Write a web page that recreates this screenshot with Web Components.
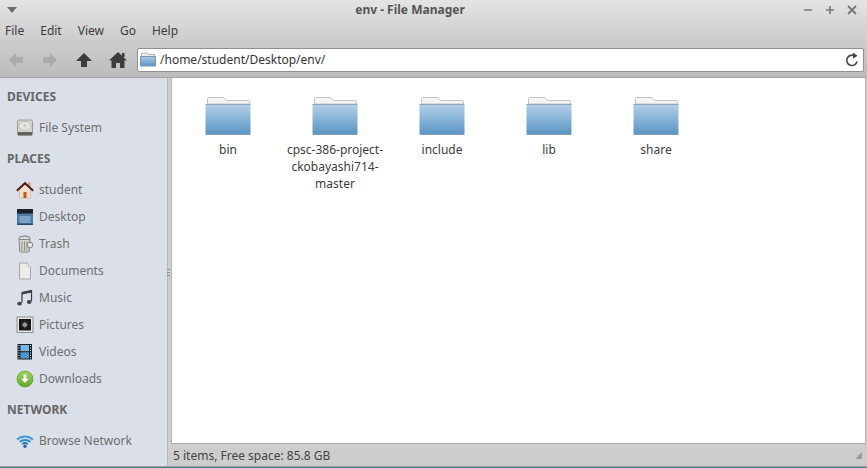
<!DOCTYPE html>
<html>
<head>
<meta charset="utf-8">
<title>env - File Manager</title>
<style>
  html, body { margin: 0; height: 100%; background: #4f7f8c; overflow: hidden; }
  body { font: 12px "Noto Sans", sans-serif; color: #333; }
</style>
</head>
<body>
<fm-window>
  <fm-header slot="header"></fm-header>
  <fm-sidebar slot="side">
    <fm-heading>DEVICES</fm-heading>
    <fm-place icon="disk">File System</fm-place>
    <fm-heading>PLACES</fm-heading>
    <fm-place icon="home">student</fm-place>
    <fm-place icon="desktop">Desktop</fm-place>
    <fm-place icon="trash">Trash</fm-place>
    <fm-place icon="doc">Documents</fm-place>
    <fm-place icon="music">Music</fm-place>
    <fm-place icon="pictures">Pictures</fm-place>
    <fm-place icon="videos">Videos</fm-place>
    <fm-place icon="downloads">Downloads</fm-place>
    <fm-heading>NETWORK</fm-heading>
    <fm-place icon="wifi">Browse Network</fm-place>
  </fm-sidebar>
  <fm-files slot="main">
    <fm-folder>bin</fm-folder>
    <fm-folder>cpsc-386-project-ckobayashi714-master</fm-folder>
    <fm-folder>include</fm-folder>
    <fm-folder>lib</fm-folder>
    <fm-folder>share</fm-folder>
  </fm-files>
  <fm-status slot="status">5 items, Free space: 85.8 GB</fm-status>
</fm-window>

<script>
// icons for the side pane, all on a 18x18 box
const ICONS = {
  disk: `<rect x="1.500" y="1" width="15" height="15.500" rx="1.500" fill="#d6d6d3" stroke="#9a9a97"/>
    <ellipse cx="9" cy="7" rx="6" ry="4.600" fill="#e4e4e1" stroke="#b0b0ad" stroke-width=".7"/>
    <circle cx="9" cy="6.600" r="1.400" fill="#c4c4c1"/>
    <rect x="2" y="13" width="14" height="3.100" fill="#62615c"/>`,
  home: `<rect x="12" y="1.500" width="2.500" height="5" fill="#c9a58a"/>
    <path d="M3.500 8.500V17h11V8.500L9 3.500z" fill="#f1dfcc" stroke="#c8ab90" stroke-width=".6"/>
    <rect x="7.500" y="11" width="3" height="6" fill="#b9591b"/>
    <path d="M.8 9.800 9 2.200l8.200 7.600" fill="none" stroke="#561a14" stroke-width="2"/>`,
  desktop: `<rect x="1" y="1" width="16" height="16" rx="1" fill="#4a7da6"/>
    <rect x="1" y="1" width="16" height="4.500" fill="#1d2126"/>
    <rect x="3.500" y="8" width="11" height="7" fill="#7aa3c4"/>
    <rect x="1" y="15.500" width="16" height="1.500" fill="#2a4b68"/>`,
  trash: `<ellipse cx="8.500" cy="3.500" rx="5.500" ry="2.400" fill="none" stroke="#8d8d8a" stroke-width="1.100"/>
    <path d="M3 4.500 3.800 16.500C6 17.500 11 17.500 13.200 16.500L14 4.500z" fill="#d5d5d2" stroke="#858582"/>
    <path d="M6 6.500v9M8.500 6.500v9.500M11 6.500v9" stroke="#8d8d8a" fill="none"/>
    <circle cx="14" cy="10" r="2.800" fill="#e6e6e3" stroke="#858582"/>`,
  doc: `<path d="M3.500 1h7.500l3.500 3.500V17h-11z" fill="#ececea" stroke="#a6a6a3"/>
    <path d="M11 1v3.500h3.500z" fill="#fafaf9" stroke="#b0b0ad" stroke-width=".6"/>`,
  music: `<path d="M6 13.500V3.500L15.500 1.500V12" fill="none" stroke="#3a3a3a" stroke-width="1.200"/>
    <path d="M6 3.500 15.500 1.500V3.500L6 5.500z" fill="#3a3a3a"/>
    <ellipse cx="3.600" cy="14.600" rx="2.400" ry="1.900" fill="#444"/>
    <ellipse cx="13.200" cy="13" rx="2.400" ry="1.900" fill="#444"/>`,
  pictures: `<rect x="1" y="1" width="16" height="15.500" fill="#e9e9e6" stroke="#8f8f8c"/>
    <rect x="3" y="3" width="12" height="11.500" fill="#181818"/>
    <circle cx="8.800" cy="8.700" r="2" fill="#c9c9c6"/>
    <path d="M8.800 5.200v7M5.300 8.700h7M6.400 6.300l4.800 4.800M11.200 6.300l-4.800 4.800" stroke="#8e8e8b" stroke-width=".7"/>`,
  videos: `<rect x="1.500" y="1" width="14.500" height="15.500" fill="#202020"/>
    <rect x="4.500" y="2" width="8.500" height="6.200" fill="#6fb7ee"/>
    <rect x="4.500" y="9.300" width="8.500" height="6.200" fill="#4b98d8"/>
    <path d="M2.500 2.500h1M2.500 5h1M2.500 7.500h1M2.500 10h1M2.500 12.500h1M2.500 15h1M14 2.500h1M14 5h1M14 7.500h1M14 10h1M14 12.500h1M14 15h1" stroke="#e6e6e6"/>`,
  downloads: `<circle cx="9" cy="9" r="8" fill="url(#dl)" stroke="#5c9a2a" stroke-width=".7"/>
    <defs><linearGradient id="dl" x1="0" y1="0" x2="0" y2="1"><stop offset="0" stop-color="#a4d65a"/><stop offset="1" stop-color="#5fa62c"/></linearGradient></defs>
    <path d="M7.600 4.500h2.800v4.200h2.400L9 13 5.200 8.700h2.400z" fill="#fff"/>`,
  wifi: `<path d="M1 7.500C5.500 3.400 12.500 3.400 17 7.500" fill="none" stroke="#3c9bdc" stroke-width="2"/>
    <path d="M3.600 9.800C6.700 7.300 11.300 7.300 14.400 9.800" fill="none" stroke="#2f8ccc" stroke-width="2"/>
    <path d="M6.200 12C7.900 10.800 10.100 10.800 11.800 12" fill="none" stroke="#2678b4" stroke-width="1.800"/>
    <circle cx="9" cy="14.300" r="1.700" fill="#1f6aa3"/>`
};

class FmWindow extends HTMLElement {
  constructor() {
    super();
    this.attachShadow({ mode: "open" }).innerHTML = `
      <style>
        :host { display: grid; width: 867px; height: 467px; background: #cdcdcd; box-sizing: border-box;
          grid-template: 78px 1fr 22px / 168px 1fr; border-bottom: 1px solid #9c9c9c; }
        .h { grid-column: 1 / 3; display: block; }
        .s { grid-row: 2 / 4; display: block; min-height: 0; }
      </style>
      <div class="h"><slot name="header"></slot></div>
      <div class="s"><slot name="side"></slot></div>
      <slot name="main"></slot>
      <slot name="status"></slot>`;
  }
}

class FmHeader extends HTMLElement {
  constructor() {
    super();
    this.attachShadow({ mode: "open" }).innerHTML = `
      <style>
        :host { display: block; height: 78px; box-sizing: border-box; overflow: hidden;
          background: linear-gradient(#e4e4e4, #cbcbcb 44px, #bcbcbc 77px);
          border-bottom: 1px solid #a3a3a3; }
        .title { height: 19px; display: flex; align-items: center; padding: 0 10px 0 7px; }
        .title b { flex: 1; text-align: center; font-weight: 700; font-size: 12px; color: #555; }
        .title svg { display: block; }
        .btns { display: flex; gap: 11px; }
        nav { height: 23px; display: flex; align-items: center; padding-left: 5px; gap: 16px; color: #3c3c3c; }
        .tools { display: flex; align-items: center; height: 35px; padding: 0 3px 0 0; }
        .tools button { all: unset; width: 34px; height: 24px; display: flex; align-items: center; justify-content: center; }
        .tools button:first-child { margin-left: -1px; }
        .addr { flex: 1; height: 24px; margin-left: 2px; box-sizing: border-box; background: #fff; border: 1px solid #8f8f8f; border-radius: 2px;
          display: flex; align-items: center; padding: 0 3px 0 2px; color: #333; font-size: 12px; }
        .addr span { flex: 1; padding-left: 4px; }
      </style>
      <div class="title">
        <svg width="10" height="6" viewBox="0 0 10 6"><path d="M0 0h10L5 6z" fill="#6e6e6e"/></svg>
        <b>env - File Manager</b>
        <div class="btns">
          <svg width="10" height="10" viewBox="0 0 10 10"><path d="M1 5h8" stroke="#777" stroke-width="1.600"/></svg>
          <svg width="12" height="10" viewBox="0 0 12 10"><path d="M6 1v8M2 5h8" stroke="#777" stroke-width="1.600"/></svg>
          <svg width="10" height="10" viewBox="0 0 10 10"><path d="M1 1l8 8M9 1l-8 8" stroke="#777" stroke-width="1.800"/></svg>
        </div>
      </div>
      <nav><span>File</span><span>Edit</span><span>View</span><span>Go</span><span>Help</span></nav>
      <div class="tools">
        <button><svg width="18" height="16" viewBox="0 0 18 16"><path d="M9 1 2 8l7 7v-4h7V5H9z" fill="#ababab"/></svg></button>
        <button><svg width="18" height="16" viewBox="0 0 18 16"><path d="M9 1l7 7-7 7v-4H2V5h7z" fill="#ababab"/></svg></button>
        <button><svg width="18" height="16" viewBox="0 0 18 16"><path d="M9 1 1 9h5v6h6V9h5z" fill="#3c3c3c"/></svg></button>
        <button><svg width="20" height="18" viewBox="0 0 20 18"><path d="M14 2h2.500v4H14z" fill="#3c3c3c"/><path d="M10 1 1 9.500h2.500V17H8v-5h4v5h4.500V9.500H19z" fill="#3c3c3c"/></svg></button>
        <div class="addr">
          <svg width="16" height="15" viewBox="0 0 16 15">
            <defs><linearGradient id="f" x1="0" y1="0" x2="0" y2="1"><stop offset="0" stop-color="#a9cbe8"/><stop offset="1" stop-color="#5a93c4"/></linearGradient></defs>
            <path d="M1.500 1h6l1 1.500h6v3h-13z" fill="#ececec" stroke="#b4b4b4"/>
            <path d="M.5 4.500h15v9.500h-15z" fill="url(#f)" stroke="#7f93a6"/>
          </svg>
          <span>/home/student/Desktop/env/</span>
          <svg width="16" height="16" viewBox="0 0 16 16"><path d="M13 9.500A5.200 5.200 0 1 1 10.500 3.800" fill="none" stroke="#444" stroke-width="1.600"/><path d="M9 .5l4.500 3.300L9 6.800z" fill="#444"/></svg>
        </div>
      </div>`;
  }
}

class FmSidebar extends HTMLElement {
  constructor() {
    super();
    this.attachShadow({ mode: "open" }).innerHTML = `
      <style>
        :host { display: block; height: 100%; box-sizing: border-box; padding-top: 1px; background: #dbe0e8;
          border-right: 1px solid #b9b9b9; color: #6b6b6b; position: relative; }
        .grip { position: absolute; right: -3px; top: 191px; width: 3px; height: 8px;
          background: repeating-linear-gradient(#8e8e8e 0 1px, transparent 1px 3px); }
      </style>
      <slot></slot><div class="grip"></div>`;
  }
}

class FmHeading extends HTMLElement {
  constructor() {
    super();
    this.attachShadow({ mode: "open" }).innerHTML = `
      <style>
        :host { display: flex; align-items: center; height: 35px; padding-left: 7px; font-weight: 700; font-size: 12px; color: #666; }
      </style><slot></slot>`;
  }
}

class FmPlace extends HTMLElement {
  constructor() {
    super();
    const icon = ICONS[this.getAttribute("icon")] || "";
    this.attachShadow({ mode: "open" }).innerHTML = `
      <style>
        :host { display: flex; align-items: center; height: 27px; padding-left: 16px; gap: 5px; color: #6e6e6e; font-size: 12px; }
        svg { flex: none; display: block; }
      </style>
      <svg width="18" height="18" viewBox="0 0 18 18">${icon}</svg><slot></slot>`;
  }
}

class FmFiles extends HTMLElement {
  constructor() {
    super();
    this.attachShadow({ mode: "open" }).innerHTML = `
      <style>
        :host { display: flex; align-items: flex-start; background: #fff; min-height: 0; padding: 17px 0 0 2.5px;
          margin: 0 1px 0 3px; border-left: 1px solid #b5b5b5; border-right: 1px solid #b5b5b5; border-bottom: 1px solid #a8a8a8; box-sizing: border-box; }
      </style><slot></slot>`;
  }
}

class FmFolder extends HTMLElement {
  constructor() {
    super();
    this.attachShadow({ mode: "open" }).innerHTML = `
      <style>
        :host { display: block; width: 107px; flex: none; text-align: center; color: #3d3d3d; font-size: 12px; line-height: 17px; }
        svg { display: block; margin: 0 auto 4px; }
        .t { display: block; width: 104px; margin: 0 auto; overflow-wrap: anywhere; }
      </style>
      <svg width="48" height="42" viewBox="0 0 48 42">
        <defs><linearGradient id="g" x1="0" y1="0" x2="0" y2="1"><stop offset="0" stop-color="#b5d0e8"/><stop offset="1" stop-color="#5a96c4"/></linearGradient></defs>
        <path d="M3.500 9V3.500q0-1 1-1H20l2.500 3h22q1 0 1 1V9z" fill="#f4f4f4" stroke="#c4c4c4"/>
        <path d="M1.500 9h45v29q0 1-1 1h-43q-1 0-1-1z" fill="url(#g)"/>
        <path d="M1.500 39.500h45" stroke="#8a9aa8" stroke-width="1"/>
        <path d="M1.500 9.500h45" stroke="#8da6bc" stroke-width="1"/>
      </svg>
      <span class="t"><slot></slot></span>`;
  }
}

class FmStatus extends HTMLElement {
  constructor() {
    super();
    this.attachShadow({ mode: "open" }).innerHTML = `
      <style>
        :host { display: flex; align-items: center; justify-content: space-between; height: 22px; padding: 0 5px 0 5px; color: #444; font-size: 12px; background: #cdcdcd; }
      </style>
      <span><slot></slot></span>
      <svg width="7" height="7" viewBox="0 0 7 7"><path d="M7 0v7H0z" fill="#9a9a9a"/></svg>`;
  }
}

customElements.define("fm-window", FmWindow);
customElements.define("fm-header", FmHeader);
customElements.define("fm-sidebar", FmSidebar);
customElements.define("fm-heading", FmHeading);
customElements.define("fm-place", FmPlace);
customElements.define("fm-files", FmFiles);
customElements.define("fm-folder", FmFolder);
customElements.define("fm-status", FmStatus);
</script>
</body>
</html>
